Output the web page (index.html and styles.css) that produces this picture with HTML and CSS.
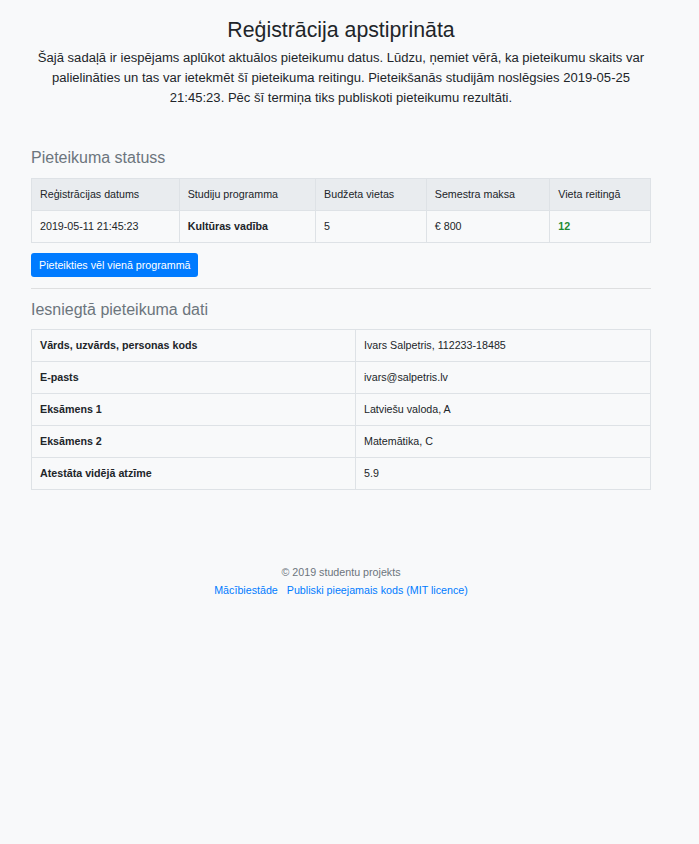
FILE: index.html
```html
<!DOCTYPE html>
<html lang="lv">
<head>
<meta charset="utf-8">
<title>Reģistrācija apstiprināta</title>
<link rel="stylesheet" href="styles.css">
</head>
<body>
<div class="page">
  <div class="container">
    <header class="intro">
      <h1 class="title">Reģistrācija apstiprināta</h1>
      <p class="lead">Šajā sadaļā ir iespējams aplūkot aktuālos pieteikumu datus. Lūdzu, ņemiet vērā, ka pieteikumu skaits var palielināties un tas var ietekmēt šī pieteikuma reitingu. Pieteikšanās studijām noslēgsies 2019-05-25 21:45:23. Pēc šī termiņa tiks publiskoti pieteikumu rezultāti.</p>
    </header>

    <section class="status">
      <h2 class="section-title">Pieteikuma statuss</h2>
      <table class="table">
        <thead>
          <tr>
            <th>Reģistrācijas datums</th>
            <th>Studiju programma</th>
            <th>Budžeta vietas</th>
            <th>Semestra maksa</th>
            <th>Vieta reitingā</th>
          </tr>
        </thead>
        <tbody>
          <tr>
            <td>2019-05-11 21:45:23</td>
            <td class="strong">Kultūras vadība</td>
            <td>5</td>
            <td>€ 800</td>
            <td class="strong rank">12</td>
          </tr>
        </tbody>
      </table>
      <a class="btn" href="#">Pieteikties vēl vienā programmā</a>
    </section>

    <hr class="divider">

    <section class="data">
      <h2 class="section-title">Iesniegtā pieteikuma dati</h2>
      <table class="table">
        <tbody>
          <tr><td class="strong">Vārds, uzvārds, personas kods</td><td>Ivars Salpetris, 112233-18485</td></tr>
          <tr><td class="strong">E-pasts</td><td>ivars@salpetris.lv</td></tr>
          <tr><td class="strong">Eksāmens 1</td><td>Latviešu valoda, A</td></tr>
          <tr><td class="strong">Eksāmens 2</td><td>Matemātika, C</td></tr>
          <tr><td class="strong">Atestāta vidējā atzīme</td><td>5.9</td></tr>
        </tbody>
      </table>
    </section>

    <footer class="footer">
      <p class="copy">© 2019 studentu projekts</p>
      <ul class="links">
        <li><a href="#">Mācībiestāde</a></li>
        <li><a href="#">Publiski pieejamais kods (MIT licence)</a></li>
      </ul>
    </footer>
  </div>
</div>
</body>
</html>
```

FILE: styles.css
```css
* { box-sizing: border-box; }
html, body { margin: 0; padding: 0; }
body {
  background: #f8f9fa;
  color: #212529;
  font-family: "Liberation Sans", Arial, sans-serif;
  font-size: 10.7px;
  line-height: 18px;
}
.page {
  width: 682px;
}
.container {
  max-width: 650px;
  margin: 0 auto;
  padding: 0 15px;
}
.intro {
  text-align: center;
  padding-top: 17px;
  padding-bottom: 40px;
}
.title {
  margin: 0 0 5px;
  font-size: 21.3px;
  font-weight: 400;
  line-height: 26px;
}
.lead {
  margin: 0;
  font-size: 13.05px;
  line-height: 20px;
}
.section-title {
  margin: 0 0 10px;
  font-size: 16px;
  font-weight: 400;
  color: #6c757d;
  line-height: 20px;
}
.data .section-title {
  margin: 0 0 9px;
  padding-top: 1px;
}
.table {
  width: 100%;
  border-collapse: collapse;
  margin-bottom: 10px;
}
.table th, .table td {
  border: 1px solid #dee2e6;
  padding: 6px 8px;
  text-align: left;
  vertical-align: top;
  font-weight: 400;
  line-height: 19px;
}
.table thead th {
  background: #e9ecef;
}
.table .strong { font-weight: 700; }
.table .rank { color: #1e8a34; }
.btn {
  display: inline-block;
  background: #007bff;
  color: #fff;
  text-decoration: none;
  border-radius: 3px;
  padding: 3px 8px;
  line-height: 18px;
}
.divider {
  border: 0;
  border-top: 1px solid rgba(0,0,0,.1);
  margin: 11px 0 10px;
}
.footer {
  text-align: center;
  color: #6c757d;
  padding-top: 63px;
}
.copy { margin: 0; }
.links {
  list-style: none;
  margin: 0;
  padding: 0;
  display: flex;
  justify-content: center;
  gap: 9px;
}
.links a { color: #007bff; text-decoration: none; }
```
